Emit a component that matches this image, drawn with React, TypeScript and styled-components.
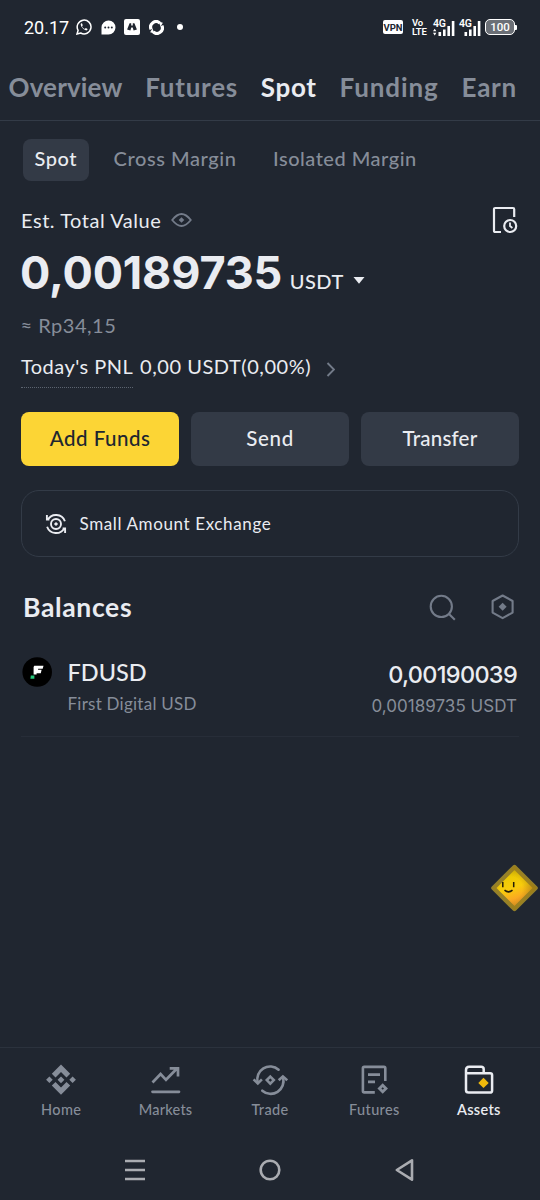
import React from 'react';
import styled, { createGlobalStyle } from 'styled-components';

const color = {
  bg: '#202630',
  text: '#eaecf1',
  muted: '#868d99',
  dim: '#737b89',
  surface: '#333a46',
  line: '#333b47',
  yellow: '#fcd535',
};

const GlobalStyle = createGlobalStyle`
  *, *::before, *::after { box-sizing: border-box; }
  html, body { margin: 0; background: ${color.bg}; }
  body { font-family: Lato, 'Liberation Sans', sans-serif; color: ${color.text}; }
  button { font: inherit; color: inherit; background: none; border: 0; padding: 0; }
  svg { display: block; flex: none; }
`;

const Screen = styled.div`
  width: 540px;
  height: 1200px;
  display: flex;
  flex-direction: column;
  overflow: hidden;
  background: ${color.bg};
  white-space: nowrap;
`;

/* Status bar */
const StatusBar = styled.header`
  height: 54px;
  flex: none;
  display: flex;
  justify-content: space-between;
  align-items: center;
  padding: 0 23px 0 24px;
  color: #fff;
  font-family: Roboto, sans-serif;
`;
const StatusGroup = styled.div<{ $gap: number }>`
  display: flex;
  align-items: center;
  gap: ${(p) => p.$gap}px;
`;
const Clock = styled.span`
  font-size: 18px;
  line-height: 24px;
  padding-top: 1px;
  margin-right: -1.5px;
`;
const Dot = styled.span`
  width: 6px;
  height: 6px;
  border-radius: 50%;
  background: #fff;
  margin-left: 5px;
`;
const VpnBadge = styled.span`
  width: 20px;
  height: 14px;
  border-radius: 2px;
  background: #fff;
  color: ${color.bg};
  font-size: 9.5px;
  font-weight: 700;
  line-height: 15px;
  text-align: center;
  margin-right: 5px;
`;
const Volte = styled.span`
  display: flex;
  flex-direction: column;
  width: 15px;
  font-size: 9.5px;
  font-weight: 600;
  line-height: 9px;
  letter-spacing: -0.2px;
  margin-right: 2px;
`;
const Signal = styled.span`
  width: 22px;
  height: 17px;
  display: grid;
  & > * { grid-area: 1 / 1; }
`;
const SignalLabel = styled.span`
  font-size: 10.5px;
  font-weight: 600;
  line-height: 9px;
  letter-spacing: -0.3px;
`;
const Battery = styled.span`
  display: flex;
  align-items: center;
  &::after {
    content: '';
    width: 2px;
    height: 5px;
    background: #fff;
    border-radius: 0 1px 1px 0;
  }
`;
const BatteryBody = styled.span`
  width: 30px;
  height: 16px;
  border: 1.5px solid #fff;
  border-radius: 5px;
  background: #6b6f76;
  font-size: 11.5px;
  font-weight: 500;
  line-height: 15px;
  text-align: center;
`;

/* Account tabs */
const Tabs = styled.nav`
  height: 67px;
  flex: none;
  display: flex;
  align-items: center;
  gap: 22.8px;
  padding: 0 8.5px;
  border-bottom: 1px solid ${color.line};
`;
const Tab = styled.button<{ $active?: boolean; $ls: number }>`
  font-size: 26px;
  font-weight: 700;
  line-height: 32px;
  letter-spacing: ${(p) => p.$ls}px;
  color: ${(p) => (p.$active ? color.text : color.muted)};
`;

const Content = styled.main`
  flex: 1;
  display: flex;
  flex-direction: column;
  padding: 18px 21px 0;
`;

const SubTabs = styled.div`
  display: flex;
  gap: 12.5px;
  margin-left: 1.5px;
`;
const SubTab = styled.button<{ $active?: boolean; $ls: number }>`
  height: 42px;
  padding: 0 12px 4px;
  border-radius: 8px;
  font-size: 20px;
  font-weight: 500;
  letter-spacing: ${(p) => p.$ls}px;
  color: ${(p) => (p.$active ? color.text : color.muted)};
  background: ${(p) => (p.$active ? color.surface : 'transparent')};
`;

const EstimateRow = styled.div`
  height: 30px;
  margin-top: 24px;
  display: flex;
  align-items: center;
  padding-right: 1px;
  & > :last-child { margin-left: auto; }
`;
const EstimateLabel = styled.span`
  font-size: 20px;
  letter-spacing: 0.54px;
  margin-right: 9.5px;
`;
const AmountRow = styled.div`
  height: 72px;
  display: flex;
  align-items: baseline;
`;
const Amount = styled.span`
  font-family: Inter, sans-serif;
  font-size: 45px;
  font-weight: 700;
  line-height: 76px;
  letter-spacing: -0.15px;
  margin-left: -1px;
`;
const Unit = styled.span`
  font-size: 20px;
  font-weight: 500;
  letter-spacing: 0.5px;
  margin: 0 9px 0 7.5px;
`;
const Fiat = styled.div`
  height: 38px;
  font-size: 20px;
  line-height: 37px;
  letter-spacing: 0.5px;
  margin-left: -0.5px;
  color: ${color.muted};
`;
const PnlRow = styled.div`
  height: 44px;
  display: flex;
  margin-top: -1px;
  padding-bottom: 1px;
  font-size: 20px;
  line-height: 44px;
`;
const PnlLabel = styled.span`
  height: 44px;
  width: 112px;
  border-bottom: 1px dotted #5c6470;
  margin-right: 7px;
  letter-spacing: 0.45px;
`;
const PnlValue = styled.span`
  margin-right: 15px;
  letter-spacing: 0.55px;
`;

const Actions = styled.div`
  display: grid;
  grid-template-columns: repeat(3, 1fr);
  gap: 12px;
  margin-top: 23.5px;
`;
const Action = styled.button<{ $primary?: boolean; $ls: number }>`
  height: 54px;
  padding-bottom: 1px;
  border-radius: 8px;
  font-size: 20.5px;
  font-weight: 500;
  letter-spacing: ${(p) => p.$ls}px;
  color: ${(p) => (p.$primary ? '#202630' : color.text)};
  background: ${(p) => (p.$primary ? color.yellow : color.surface)};
`;

const ExchangeCard = styled.div`
  height: 67px;
  margin-top: 24.5px;
  border: 1.5px solid ${color.line};
  border-radius: 18px;
  display: flex;
  align-items: center;
  gap: 13px;
  padding-left: 22.5px;
  font-size: 17px;
  letter-spacing: 0.62px;
`;

const BalancesHeader = styled.div`
  height: 34px;
  margin-top: 33px;
  padding: 0 4px 0 2px;
  display: flex;
  align-items: center;
  gap: 35px;
`;
const SectionTitle = styled.h2`
  margin: 0 auto 0 0;
  font-size: 26.5px;
  font-weight: 700;
  line-height: 32px;
  padding-bottom: 1px;
  letter-spacing: 0.65px;
`;

const AssetRow = styled.div`
  height: 113px;
  padding: 32px 2px 0 1px;
  display: flex;
  border-bottom: 1px solid #272d38;
`;
const AssetIcon = styled.span`
  width: 30px;
  height: 30px;
  margin: 1px 15.5px 0 0;
`;
const AssetColumn = styled.div<{ $end?: boolean }>`
  display: flex;
  flex-direction: column;
  align-items: ${(p) => (p.$end ? 'flex-end' : 'flex-start')};
  margin-left: ${(p) => (p.$end ? 'auto' : '0')};
  padding-top: ${(p) => (p.$end ? 3 : 0)}px;
`;
const AssetMain = styled.span<{ $number?: boolean; $ls: number }>`
  font-family: ${(p) => (p.$number ? 'Inter' : 'Lato')}, sans-serif;
  font-size: 23.5px;
  font-weight: 500;
  line-height: 32px;
  letter-spacing: ${(p) => p.$ls}px;
`;
const AssetSub = styled.span<{ $number?: boolean; $ls: number }>`
  font-family: ${(p) => (p.$number ? 'Inter' : 'Lato')}, sans-serif;
  font-size: 17px;
  line-height: ${(p) => (p.$number ? 30 : 32)}px;
  letter-spacing: ${(p) => p.$ls}px;
  color: ${color.muted};
`;

const Mascot = styled.div`
  position: absolute;
  left: 490px;
  top: 864px;
`;

/* Bottom navigation */
const BottomNav = styled.nav`
  height: 93px;
  flex: none;
  display: grid;
  grid-template-columns: repeat(5, 1fr);
  padding: 14px 9px 0;
  border-top: 1px solid #2b323d;
`;
const NavItem = styled.button<{ $active?: boolean; $ls: number }>`
  display: flex;
  flex-direction: column;
  align-items: center;
  gap: 1px;
  font-size: 14.5px;
  font-weight: ${(p) => (p.$active ? 600 : 500)};
  line-height: 22px;
  letter-spacing: ${(p) => p.$ls}px;
  color: ${(p) => (p.$active ? color.text : color.muted)};
`;
const SystemNav = styled.footer`
  height: 60px;
  flex: none;
  display: grid;
  grid-template-columns: repeat(3, 135px);
  justify-content: center;
  justify-items: center;
  align-items: center;
`;

const SignalBars = ({ arrows }: { arrows?: boolean }) => (
  <svg width="22" height="17" viewBox="0 0 22 17" fill="#fff">
    <rect x="5.5" y="13" width="2.6" height="4" />
    <rect x="10" y="10.5" width="2.6" height="6.5" />
    <rect x="14.4" y="7" width="2.6" height="10" />
    <rect x="18.8" y="2" width="2.6" height="15" />
    {arrows && <path d="M0 12.3 1.7 9.7 3.4 12.3zM0 13.8h3.4L1.7 16.4z" />}
  </svg>
);

const HomeIcon = () => (
  <svg width="36" height="36" viewBox="0 0 36 36" fill="currentColor">
    <path d="M18 2.6 27.2 11.8 23.5 15.5 18 10 12.5 15.5 8.8 11.8zM18 32.8 27.2 23.6 23.5 19.9 18 25.4 12.5 19.9 8.8 23.6z" />
    <path d="M18 14.4 21.4 17.8 18 21.2 14.6 17.8zM6.4 14.5 9.7 17.8 6.4 21.1 3.1 17.8zM29.6 14.5 32.9 17.8 29.6 21.1 26.3 17.8z" />
  </svg>
);
const MarketsIcon = () => (
  <svg width="36" height="36" viewBox="0 0 36 36" fill="none" stroke="currentColor" strokeWidth="2.7">
    <path d="M4.5 20.5 12.6 12 18 17.8 29 6.5M21.7 6.3H30V14.5" />
    <path d="M4.5 29.8H31" strokeLinecap="round" />
  </svg>
);
const TradeIcon = () => (
  <svg width="36" height="36" viewBox="0 0 36 36" fill="none" stroke="currentColor" strokeWidth="2.6">
    <path d="M26.6 7.7A12.8 12.8 0 0 0 5.7 20.5M10.3 28.7A12.8 12.8 0 0 0 31 15.5" strokeLinecap="round" />
    <path d="M1.6 17.4 5.8 21.4 9.9 17.4M26.7 18.3 30.9 14.4 35.2 18.3" />
    <path d="M18.3 14.6 21.8 18.1 18.3 21.6 14.8 18.1z" />
  </svg>
);
const FuturesIcon = () => (
  <svg width="36" height="36" viewBox="0 0 36 36" fill="none" stroke="currentColor" strokeWidth="2.6">
    <path d="M18.8 30.4H8.2Q6.9 30.4 6.9 29V6.2Q6.9 4.9 8.2 4.9H28Q29.3 4.9 29.3 6.2V19" />
    <path d="M12 12.6H24M12 19.9H19" />
    <path d="M26.7 23.2 30 26.5 26.7 29.8 23.4 26.5z" strokeWidth="2.8" />
  </svg>
);
const AssetsIcon = () => (
  <svg width="36" height="36" viewBox="0 0 36 36" fill="none" stroke="#eaecf1" strokeWidth="2.5">
    <path d="M5 11.4V28Q5 30.6 7.6 30.6H28.9Q31.1 30.6 31.1 28.4V13.1Q31.1 11.2 29.2 11.2H5V8.1Q5 4.7 8.2 4.7H20.1Q22.7 4.7 22.7 7.2V11.2" />
    <path d="M22.5 15.7 27.7 20.9 22.5 26.1 17.3 20.9z" fill="#f0b90b" stroke="none" />
  </svg>
);

const navItems = [
  { label: 'Home', icon: <HomeIcon />, ls: 0.4 },
  { label: 'Markets', icon: <MarketsIcon />, ls: 0.2 },
  { label: 'Trade', icon: <TradeIcon />, ls: 0.35 },
  { label: 'Futures', icon: <FuturesIcon />, ls: 0.35 },
  { label: 'Assets', icon: <AssetsIcon />, ls: 0.3, active: true },
];

const tabs = [
  { label: 'Overview', ls: 0.15 },
  { label: 'Futures', ls: 0.75 },
  { label: 'Spot', ls: 0.7, active: true },
  { label: 'Funding', ls: 0.9 },
  { label: 'Earn', ls: 0.75 },
];

export default function App() {
  return (
    <Screen>
      <GlobalStyle />
      <StatusBar>
        <StatusGroup $gap={8.5}>
          <Clock>20.17</Clock>
          <svg width="16" height="16" viewBox="0 0 16 16" fill="none" stroke="#fff" strokeWidth="1.5">
            <path d="M1 15 2.1 11.4A6.9 6.9 0 1 1 4.7 14z" />
            <path d="M5 4.3Q4.2 5.6 5.3 7.6 7.6 11.2 10.2 11.5 11.5 11.3 11.6 10L9.8 9 8.8 10Q6.8 9.2 6 7.2L6.8 6.3 6.1 4.4z" fill="#fff" stroke="none" />
          </svg>
          <svg width="15" height="15" viewBox="0 0 15 15" fill="#fff">
            <path d="M.5 7.3A7 7 0 1 1 7.5 14.5H.5z" />
            <g fill={color.bg}><circle cx="4.2" cy="7.4" r="1" /><circle cx="7.5" cy="7.4" r="1" /><circle cx="10.8" cy="7.4" r="1" /></g>
          </svg>
          <svg width="16" height="16" viewBox="0 0 16 16">
            <rect width="16" height="16" rx="2" fill="#fff" />
            <path d="M5.6 4.3H7.2V6.4H8.8V4.3H10.4L12.9 10.6 9.6 11.4 8.7 8.4H7.3L6.4 11.4 3.1 10.6z" fill={color.bg} />
          </svg>
          <svg width="15" height="15" viewBox="0 0 16 16" fill="none" stroke="#fff" strokeWidth="3.4">
            <path d="M2.3 10A5.8 5.8 0 0 1 11.5 3.3M13.7 6A5.8 5.8 0 0 1 4.5 12.7" />
            <path d="M10 1.6 14.8 3 12.4 7zM6 14.4 1.2 13 3.6 9z" fill="#fff" stroke="none" />
          </svg>
          <Dot />
        </StatusGroup>
        <StatusGroup $gap={4}>
          <VpnBadge>VPN</VpnBadge>
          <Volte><span>Vo</span><span>LTE</span></Volte>
          <Signal><SignalLabel>4G</SignalLabel><SignalBars arrows /></Signal>
          <Signal><SignalLabel>4G</SignalLabel><SignalBars /></Signal>
          <Battery><BatteryBody>100</BatteryBody></Battery>
        </StatusGroup>
      </StatusBar>

      <Tabs>
        {tabs.map((t) => (
          <Tab key={t.label} $active={t.active} $ls={t.ls}>{t.label}</Tab>
        ))}
      </Tabs>

      <Content>
        <SubTabs>
          <SubTab $active $ls={0.55}>Spot</SubTab>
          <SubTab $ls={0.58}>Cross Margin</SubTab>
          <SubTab $ls={0.5}>Isolated Margin</SubTab>
        </SubTabs>

        <EstimateRow>
          <EstimateLabel>Est. Total Value</EstimateLabel>
          <svg width="21" height="15" viewBox="0 0 21 15" fill="none" stroke={color.dim} strokeWidth="1.8">
            <path d="M1.2 7Q6 1 10.5 1T19.8 7Q15 13 10.5 13T1.2 7z" />
            <path d="M10.5 4.2 13.3 7 10.5 9.8 7.7 7z" fill={color.dim} stroke="none" />
          </svg>
          <svg width="26" height="28" viewBox="0 0 26 28" fill="none" stroke={color.text} strokeWidth="2.2">
            <path d="M9 26H3.2Q2 26 2 24.8V3.2Q2 2 3.2 2H21Q22.2 2 22.2 3.2V11" />
            <circle cx="18.2" cy="20" r="6" />
            <path d="M18 16.5V20L20.4 22" strokeWidth="1.8" />
          </svg>
        </EstimateRow>
        <AmountRow>
          <Amount>0,00189735</Amount>
          <Unit>USDT</Unit>
          <svg width="12" height="12" viewBox="0 0 12 12" fill={color.text}><path d="M.5 0H11.5L6 6.8z" /></svg>
        </AmountRow>
        <Fiat>≈ Rp34,15</Fiat>
        <PnlRow>
          <PnlLabel>Today's PNL</PnlLabel>
          <PnlValue>0,00 USDT(0,00%)</PnlValue>
          <svg width="9" height="48" viewBox="0 0 9 48" fill="none" stroke={color.dim} strokeWidth="1.9"><path d="M1.5 19 8 25.5 1.5 32" /></svg>
        </PnlRow>

        <Actions>
          <Action $primary $ls={0.5}>Add Funds</Action>
          <Action $ls={0.7}>Send</Action>
          <Action $ls={0.2}>Transfer</Action>
        </Actions>

        <ExchangeCard>
          <svg width="22" height="22" viewBox="0 0 22 22" fill="none" stroke={color.text} strokeWidth="1.9">
            <circle cx="11" cy="11" r="5" />
            <path d="M1.9 2V6.6H4.4M2.6 7.2A9.4 9.4 0 0 1 19.9 8.2M20.1 20V15.4H17.6M19.4 14.8A9.4 9.4 0 0 1 2.1 13.8" />
            <path d="M11 8.9 13.1 11 11 13.1 8.9 11z" fill={color.text} stroke="none" />
          </svg>
          <span>Small Amount Exchange</span>
        </ExchangeCard>

        <BalancesHeader>
          <SectionTitle>Balances</SectionTitle>
          <svg width="27" height="27" viewBox="0 0 27 27" fill="none" stroke={color.dim} strokeWidth="2.1">
            <circle cx="12.3" cy="12.4" r="10.6" />
            <path d="M19.5 19.4 25.8 25.7" />
          </svg>
          <svg width="24" height="26" viewBox="0 0 24 26" fill="none" stroke={color.dim} strokeWidth="2.1">
            <path d="M11.6 1.5 21.6 7V18.6L11.6 24.1 1.6 18.6V7z" strokeLinejoin="round" />
            <path d="M11.6 8.8 15.6 12.8 11.6 16.8 7.6 12.8z" fill={color.dim} stroke="none" />
          </svg>
        </BalancesHeader>

        <AssetRow>
          <AssetIcon>
            <svg width="30" height="30" viewBox="0 0 30 30">
              <circle cx="15.2" cy="15" r="14.8" fill="#000" />
              <path d="M12.3 8.8H21.5L20.7 11.7H16.2L16 12.7H19.6L18.8 16.2H14.6V17.5H11.6V10z" fill="#fff" />
              <path d="M8.8 18.5H12.4V21.7H8.4z" fill="#25c67a" />
            </svg>
          </AssetIcon>
          <AssetColumn>
            <AssetMain $ls={0}>FDUSD</AssetMain>
            <AssetSub $ls={0.25}>First Digital USD</AssetSub>
          </AssetColumn>
          <AssetColumn $end>
            <AssetMain $number $ls={-0.7}>0,00190039</AssetMain>
            <AssetSub $number $ls={0.03}>0,00189735 USDT</AssetSub>
          </AssetColumn>
        </AssetRow>
      </Content>

      <Mascot>
        <svg width="49" height="48" viewBox="0 0 49 48">
          <defs>
            <linearGradient id="face" x1="0.3" y1="0.1" x2="0.6" y2="1">
              <stop offset="0" stopColor="#e6c800" />
              <stop offset="0.45" stopColor="#f8cc0c" />
              <stop offset="0.75" stopColor="#fba524" />
              <stop offset="1" stopColor="#f0902c" />
            </linearGradient>
            <radialGradient id="rim" cx="0.42" cy="0.5" r="0.5">
              <stop offset="0.5" stopColor="#b08a10" stopOpacity="0" />
              <stop offset="1" stopColor="#a07c0f" stopOpacity="0.7" />
            </radialGradient>
          </defs>
          <path d="M24.5 3 45.6 24 24.5 45 3.4 24z" fill="url(#face)" stroke="#94802a" strokeWidth="4.4" strokeLinejoin="round" />
          <path d="M24.5 1.6 47 24 24.5 46.4 2 24z" fill="url(#rim)" />
          <path d="M12.8 18V23.3M23.7 18V23.3M14.5 26.2Q18.5 29.5 22.5 26.2" fill="none" stroke="#221c08" strokeWidth="1.5" />
        </svg>
      </Mascot>

      <BottomNav>
        {navItems.map((n) => (
          <NavItem key={n.label} $active={n.active} $ls={n.ls}>
            {n.icon}
            {n.label}
          </NavItem>
        ))}
      </BottomNav>
      <SystemNav>
        <svg width="22" height="22" viewBox="0 0 22 22" stroke="#aaacb1" strokeWidth="2.5"><path d="M1 2H21M1 11H21M1 20H21" /></svg>
        <svg width="22" height="22" viewBox="0 0 22 22" fill="none" stroke="#aaacb1" strokeWidth="2.6"><circle cx="11" cy="11" r="9.3" /></svg>
        <svg width="22" height="24" viewBox="0 0 22 24" fill="none" stroke="#aaacb1" strokeWidth="2.6" strokeLinejoin="round"><path d="M2.8 12 18 2.3V21.7z" /></svg>
      </SystemNav>
    </Screen>
  );
}
